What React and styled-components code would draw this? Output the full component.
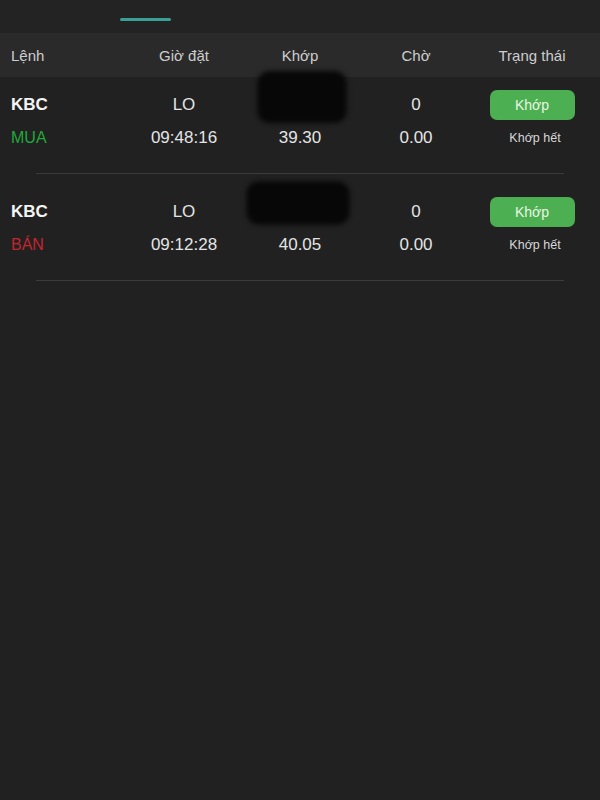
import React from "react";
import styled, { createGlobalStyle } from "styled-components";

const Global = createGlobalStyle`
  html, body { margin: 0; padding: 0; background: #212121; }
  body { font-family: "Liberation Sans", Arial, sans-serif; }
  #root { min-height: 800px; background: #212121; }
`;

const Page = styled.div`
  width: 600px;
  min-height: 800px;
  background: #212121;
  color: #e2e2e2;
`;

const TopBar = styled.div`
  height: 33px;
  background: #232323;
  padding-top: 18px;
  box-sizing: border-box;
`;

const TabIndicator = styled.div`
  margin-left: 120px;
  width: 51px;
  height: 3px;
  border-radius: 2px;
  background: #39a096;
`;

const Grid = styled.div`
  display: grid;
  grid-template-columns: 126px repeat(4, 116px);
  align-items: center;
`;

const HeaderRow = styled(Grid)`
  height: 44px;
  background: #2a2a2a;
  font-size: 15px;
  color: #cdcdcd;
`;

const HeadCell = styled.div`
  text-align: ${(p) => (p.$left ? "left" : "center")};
  padding-left: ${(p) => (p.$left ? "11px" : "0")};
`;

const Row = styled.div`
  padding: 21px 0 19px;
  &:first-child { padding-top: 11px; }
`;

const Line = styled(Grid)`
  height: 33px;
`;

const Cell = styled.div`
  position: relative;
  text-align: center;
  font-size: 17px;
  color: #e4e4e4;
`;

const Symbol = styled.div`
  padding-left: 11px;
  font-size: 17px;
  font-weight: 700;
  color: #f4f4f4;
`;

const Side = styled.div`
  padding-left: 11px;
  font-size: 16px;
  color: ${(p) => (p.$buy ? "#22a83a" : "#c2262e")};
`;

const Status = styled.div`
  display: flex;
  justify-content: center;
`;

const StatusButton = styled.div`
  width: 85px;
  height: 30px;
  border-radius: 7px;
  background: #4caf52;
  color: #e9f6e4;
  font-size: 14px;
  display: flex;
  align-items: center;
  justify-content: center;
`;

const StatusNote = styled.div`
  text-align: center;
  padding-left: 6px;
  font-size: 12.5px;
  color: #d8d8d8;
`;

const Redaction = styled.div`
  position: absolute;
  left: 50%;
  top: 50%;
  width: ${(p) => p.$w}px;
  height: ${(p) => p.$h}px;
  transform: translate(calc(-50% + ${(p) => p.$dx}px), calc(-50% + ${(p) => p.$dy}px));
  background: #070707;
  border-radius: 12px;
  filter: blur(2.5px);
`;

const Divider = styled.div`
  height: 1px;
  margin: 0 36px;
  background: #3b3b3b;
`;

const orders = [
  { sym: "KBC", buy: true, side: "MUA", type: "LO", time: "09:48:16", price: "39.30", wait: "0", waitVal: "0.00", blob: { w: 89, h: 52, dx: 2, dy: -8 } },
  { sym: "KBC", buy: false, side: "BÁN", type: "LO", time: "09:12:28", price: "40.05", wait: "0", waitVal: "0.00", blob: { w: 103, h: 43, dx: -2, dy: -9 } },
];

export default function App() {
  return (
    <Page>
      <Global />
      <TopBar>
        <TabIndicator />
      </TopBar>
      <HeaderRow>
        <HeadCell $left>Lệnh</HeadCell>
        <HeadCell>Giờ đặt</HeadCell>
        <HeadCell>Khớp</HeadCell>
        <HeadCell>Chờ</HeadCell>
        <HeadCell>Trạng thái</HeadCell>
      </HeaderRow>
      <div>
        {orders.map((o, i) => (
          <React.Fragment key={i}>
            <Row>
              <Line>
                <Symbol>{o.sym}</Symbol>
                <Cell>{o.type}</Cell>
                <Cell>
                  &nbsp;
                  <Redaction $w={o.blob.w} $h={o.blob.h} $dx={o.blob.dx} $dy={o.blob.dy} />
                </Cell>
                <Cell>{o.wait}</Cell>
                <Status>
                  <StatusButton>Khớp</StatusButton>
                </Status>
              </Line>
              <Line>
                <Side $buy={o.buy}>{o.side}</Side>
                <Cell>{o.time}</Cell>
                <Cell>{o.price}</Cell>
                <Cell>{o.waitVal}</Cell>
                <StatusNote>Khớp hết</StatusNote>
              </Line>
            </Row>
            <Divider />
          </React.Fragment>
        ))}
      </div>
    </Page>
  );
}
